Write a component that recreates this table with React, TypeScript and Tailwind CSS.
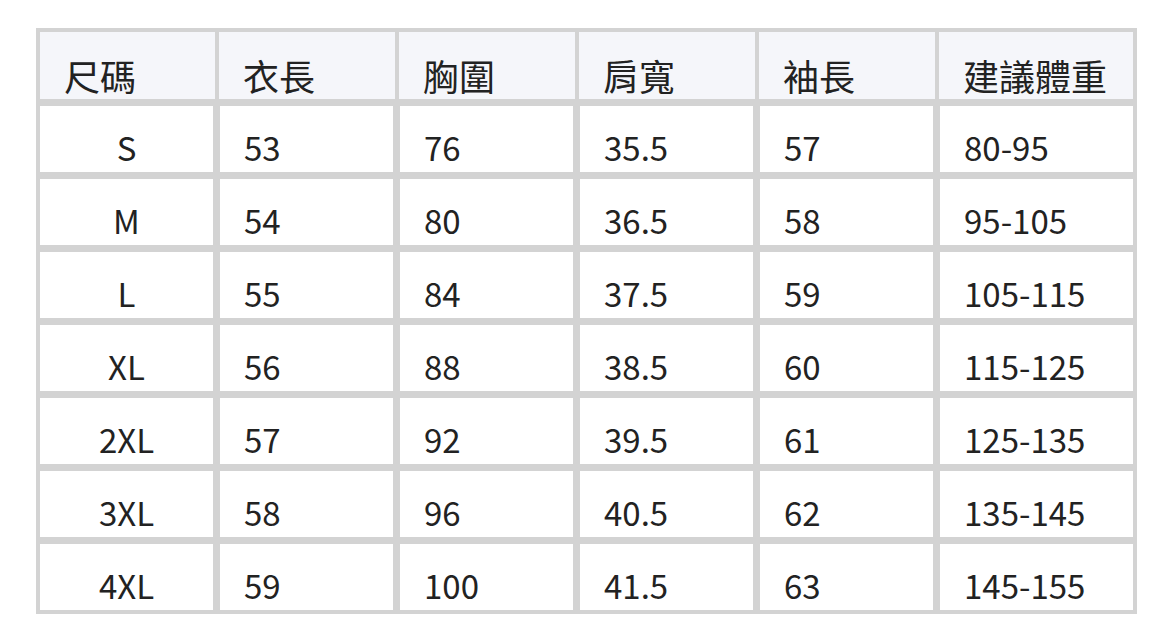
const headers = ['尺碼', '衣長', '胸圍', '肩寬', '袖長', '建議體重'];

const rows = [
  ['S', '53', '76', '35.5', '57', '80-95'],
  ['M', '54', '80', '36.5', '58', '95-105'],
  ['L', '55', '84', '37.5', '59', '105-115'],
  ['XL', '56', '88', '38.5', '60', '115-125'],
  ['2XL', '57', '92', '39.5', '61', '125-135'],
  ['3XL', '58', '96', '40.5', '62', '135-145'],
  ['4XL', '59', '100', '41.5', '63', '145-155'],
];

const headWidths = ['w-[175px]', 'w-[176px]', 'w-[176px]', 'w-[176px]', 'w-[176px]', 'w-[194px]'];
const bodyWidths = ['w-[173px]', 'w-[173px]', 'w-[173px]', 'w-[173px]', 'w-[173px]', 'w-[193px]'];

export default function App() {
  return (
    <div
      className="w-[1172px] h-[641px] bg-white pt-[28px] pl-[36px] text-[#222] leading-none"
      style={{ fontFamily: '"Noto Sans CJK TC", "Noto Sans", sans-serif' }}
    >
      <div className="w-[1101px] bg-[#d3d3d3] p-[4px] flex flex-col gap-[7px]">
        {/* header */}
        <div className="flex gap-[4px]">
          {headers.map((h, i) => (
            <div key={h} className={`${headWidths[i]} h-[67px] bg-[#f5f6fa] pt-[25px] pl-[24px] text-[36px]`}>
              {h}
            </div>
          ))}
        </div>

        {/* body */}
        {rows.map((row) => (
          <div key={row[0]} className="flex gap-[7px]">
            {row.map((cell, i) => (
              <div
                key={i}
                className={`${bodyWidths[i]} h-[66px] bg-white pt-[25px] text-[33px] ${i === 0 ? 'text-center' : 'pl-[24px]'}`}
              >
                {cell}
              </div>
            ))}
          </div>
        ))}
      </div>
    </div>
  );
}
